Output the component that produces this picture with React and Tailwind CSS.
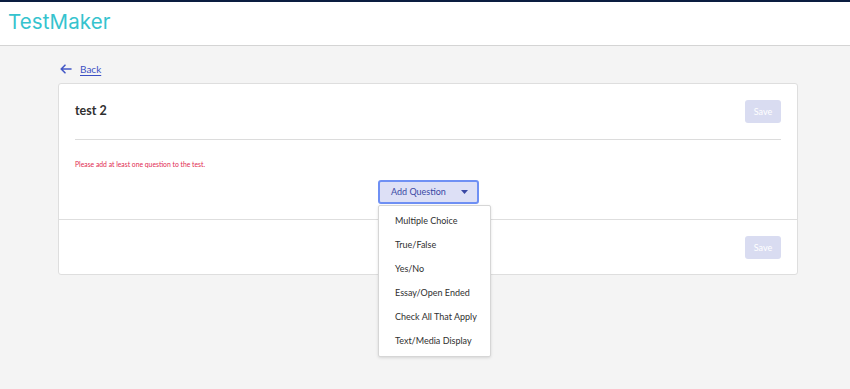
import React from "react";

const items = [
  "Multiple Choice",
  "True/False",
  "Yes/No",
  "Essay/Open Ended",
  "Check All That Apply",
  "Text/Media Display",
];

export default function App() {
  return (
    <div className="min-h-[389px] bg-[#f4f4f4] font-['Lato','Liberation_Sans',sans-serif]">
      <header className="h-[46px] border-t-2 border-b border-t-[#0a1d40] border-b-[#d4d4d4] bg-white flex items-center pl-[8px]">
        <span className="text-[20.5px] leading-none text-[#35c3ce] font-['Inter','Open_Sans',sans-serif] tracking-[0.1px] -mt-[2px]">
          TestMaker
        </span>
      </header>
      <main className="relative w-[740px] ml-[58px] pt-[16px]">
        <div className="flex items-center h-[14px] mb-[7px]">
          <svg width="12" height="10" viewBox="0 0 12 10" className="ml-[2px]" fill="none" stroke="#4458c6" strokeWidth="1.6" strokeLinecap="round" strokeLinejoin="round">
            <path d="M11 5H1.5M5 1.2L1.2 5 5 8.8" />
          </svg>
          <a href="#" className="ml-[8px] text-[10px] leading-none text-[#3b4fc4] underline underline-offset-2">
            Back
          </a>
        </div>
        <div className="bg-white border border-[#dedede] rounded-[3px]">
          <div className="px-[16px] pt-[16px] pb-[15px]">
            <div className="flex justify-between items-center h-[23px]">
              <span className="text-[12.5px] font-bold text-[#2f2f2f]">test 2</span>
              <button className="w-[36px] h-[23px] rounded-[3px] bg-[#d9dcf1] text-white text-[9px]">Save</button>
            </div>
            <div className="mt-[16px] border-t border-[#dcdcdc]" />
            <p className="mt-[20px] text-[6.8px] leading-[8px] text-[#df2a52]">
              Please add at least one question to the test.
            </p>
            <div className="mt-[12px] flex justify-center">
              <div className="relative">
                <button className="w-[101px] h-[24px] ml-[1px] rounded-[3px] border-2 border-[#6f90f4] bg-[#dde0f6] text-[#3a48a4] text-[9px] flex items-center pl-[11px]">
                  <span>Add Question</span>
                  <svg width="7" height="4" viewBox="0 0 7 4" className="ml-[15px]">
                    <path d="M0 0h7L3.5 4z" fill="#3a48a4" />
                  </svg>
                </button>
              </div>
            </div>
          </div>
          <div className="border-t border-[#dedede] px-[16px] pt-[16px] pb-[15px] flex justify-end">
            <button className="w-[36px] h-[23px] rounded-[3px] bg-[#d9dcf1] text-white text-[9px]">Save</button>
          </div>
        </div>
        <div className="absolute left-[320px] top-[159px] w-[113px] bg-white border border-[#d6d6d6] rounded-[2px] shadow-[0_1px_3px_rgba(0,0,0,0.12)] py-[3px] z-10">
          {items.map((t) => (
            <div key={t} className="h-[24px] flex items-center pl-[16px] text-[9px] text-[#2f2f2f]">
              {t}
            </div>
          ))}
        </div>
      </main>
    </div>
  );
}
